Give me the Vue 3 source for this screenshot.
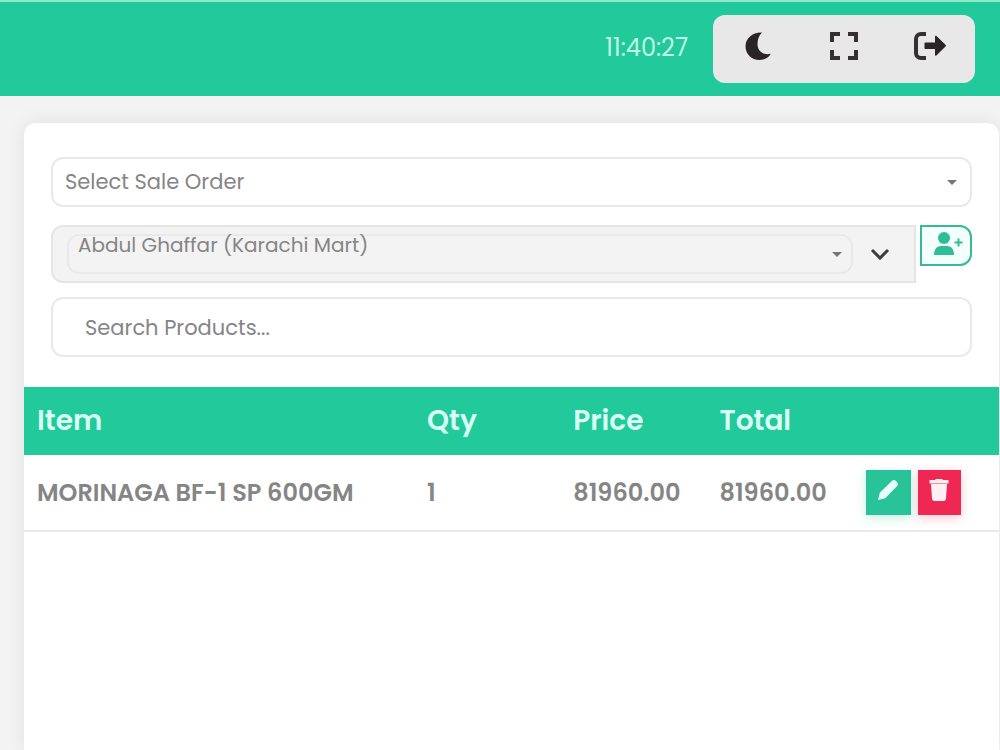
<script setup>
import { ref } from 'vue'

const order = ref('')
const customer = ref('Abdul Ghaffar (Karachi Mart)')
const search = ref('')
const items = ref([
  { id: 1, name: 'MORINAGA BF-1 SP 600GM', qty: 1, price: '81960.00', total: '81960.00' }
])
</script>

<template>
  <div class="page">
    <header class="topbar">
      <time class="clock">11:40:27</time>
      <nav class="tools" aria-label="Tools">
        <button type="button" aria-label="Dark mode">
          <svg width="26" height="28" viewBox="0 0 26 28"><path d="M17 .5C8 0 .5 6 .5 14.300.5 22 6.500 28 14.500 28c5 0 9.300-2.500 11.200-6.300-6.700 1.800-13.200-2-13.200-9.700C12.500 7 14 3.500 17 .5z" /></svg>
        </button>
        <button type="button" aria-label="Full screen">
          <svg width="28" height="28" viewBox="0 0 28 28"><path class="line" d="M2 10V2h8M18 2h8v8M26 18v8h-8M10 26H2v-8" /></svg>
        </button>
        <button type="button" aria-label="Log out">
          <svg width="32" height="28" viewBox="0 0 32 28"><path class="line" d="M12 2H7a5 5 0 0 0-5 5v14a5 5 0 0 0 5 5h5" /><path d="M11.500 10.500h9.500V5c0-1.200.8-1.600 1.700-.8l8.800 8.600c.6.600.6 1.200 0 1.800l-8.800 8.600c-.9.900-1.700.4-1.700-.8V17h-9.500c-.7 0-1-.4-1-1v-4.500c0-.6.3-1 1-1z" /></svg>
        </button>
      </nav>
    </header>

    <main class="card">
      <form class="filters" @submit.prevent>
        <div class="pick order">
          <select v-model="order" aria-label="Sale order">
            <option value="">Select Sale Order</option>
          </select>
          <svg class="caret" width="10" height="5" viewBox="0 0 10 5"><path d="M0 0h10L5 5z" /></svg>
        </div>
        <div class="customer-row">
          <div class="group">
            <div class="pick customer">
              <select v-model="customer" aria-label="Customer">
                <option>Abdul Ghaffar (Karachi Mart)</option>
              </select>
              <svg class="caret" width="10" height="5" viewBox="0 0 10 5"><path d="M0 0h10L5 5z" /></svg>
            </div>
            <button type="button" class="expand" aria-label="Show customers">
              <svg width="20" height="12" viewBox="0 0 20 12"><path d="M2 2l8 8 8-8" /></svg>
            </button>
          </div>
          <button type="button" class="add" aria-label="Add customer">
            <svg width="30" height="24" viewBox="0 0 30 24"><circle cx="11" cy="6" r="6" /><path d="M1 23c0-6 3-9 7-9h6c4 0 7 3 7 9z" /><path class="plus" d="M25.500 6.500v8M21.500 10.500h8" /></svg>
          </button>
        </div>
        <input v-model="search" class="search" type="text" placeholder="Search Products..." aria-label="Search products">
      </form>

      <table>
        <thead>
          <tr>
            <th class="wide">Item</th>
            <th>Qty</th>
            <th>Price</th>
            <th>Total</th>
            <td></td>
          </tr>
        </thead>
        <tbody>
          <tr v-for="item in items" :key="item.id">
            <td>{{ item.name }}</td>
            <td>{{ item.qty }}</td>
            <td>{{ item.price }}</td>
            <td>{{ item.total }}</td>
            <td>
              <div class="actions">
                <button type="button" class="edit" aria-label="Edit item">
                  <svg width="22" height="22" viewBox="0 0 22 22"><path d="M14.500 2.200c1.200-1.200 2.800-1.600 4-.6l1.800 1.800c1 1.200.8 2.700-.4 3.900L8.200 19.200 1 21l1.800-7.200z" /></svg>
                </button>
                <button type="button" class="remove" aria-label="Delete item">
                  <svg width="22" height="22" viewBox="0 0 22 22"><path d="M1.500 1h5.500l1-1h6l1 1h5.500v3.500h-19zM3 5h16l-1 14.500c-.1 1.400-1 2.500-2.400 2.500H6.400C5 22 4.100 20.900 4 19.500z" /></svg>
                </button>
              </div>
            </td>
          </tr>
        </tbody>
      </table>
    </main>
  </div>
</template>

<style>
body {
  margin: 0;
  background: #f3f3f3;
}
</style>

<style scoped>
* {
  box-sizing: border-box;
}
.page {
  display: flex;
  flex-direction: column;
  min-height: 100vh;
  color: #858585;
  font-family: Poppins, Inter, sans-serif;
  font-size: 20px;
}
button {
  display: flex;
  align-items: center;
  justify-content: center;
  padding: 0;
  border: 0;
  background: none;
  cursor: pointer;
}
.topbar {
  display: flex;
  align-items: center;
  justify-content: flex-end;
  gap: 25px;
  height: 96px;
  padding-right: 25px;
  border-top: 2px solid #8ee8cb;
  background: #22c99a;
}
.clock {
  padding-bottom: 4px;
  color: #c0f7e6;
  font-size: 24px;
}
.tools {
  display: flex;
  justify-content: space-between;
  width: 262px;
  height: 68px;
  padding: 0 25px 6px;
  border-radius: 12px;
  background: #e8e8e8;
}
.tools button {
  width: 40px;
}
.tools svg {
  fill: #292425;
}
.tools .line {
  fill: none;
  stroke: #353132;
  stroke-width: 4;
}
.card {
  flex: 1;
  margin: 27px 1px 0 24px;
  border-radius: 12px 12px 0 0;
  background: #fff;
  box-shadow: 0 0 20px rgba(0, 0, 0, 0.08);
}
.filters {
  display: flex;
  flex-direction: column;
  padding: 34px 27px 30px;
}
.pick {
  position: relative;
}
.pick,
.search {
  border: 2px solid #e9e9e9;
  border-radius: 12px;
}
select,
.search {
  display: block;
  width: 100%;
  color: #858585;
  font-family: inherit;
  font-size: 21px;
  appearance: none;
}
select {
  border: 0;
  background: transparent;
}
.order select {
  height: 46px;
  padding: 0 36px 2px 12px;
}
.caret {
  position: absolute;
  top: 50%;
  right: 13px;
  margin-top: -2px;
  fill: #777;
}
.customer-row {
  display: flex;
  align-items: flex-start;
  gap: 4px;
  margin: 18px 0 14px;
}
.group {
  display: flex;
  flex: 1;
  align-items: center;
  height: 58px;
  padding-left: 14px;
  border: 2px solid #e6e5e6;
  border-radius: 12px 0 0 12px;
  background: #f4f3f4;
}
.customer {
  flex: 1;
  height: 40px;
}
.customer select {
  height: 32px;
  margin-top: -7px;
  padding: 0 30px 0 9px;
  font-size: 20px;
}
.customer .caret {
  right: 9px;
}
.expand {
  width: 61px;
  height: 40px;
  padding-right: 8px;
}
.expand path {
  fill: none;
  stroke: #3c3c3c;
  stroke-width: 3;
}
.add {
  width: 52px;
  height: 41px;
  padding-bottom: 4px;
  border: 2px solid #38b995;
  border-radius: 0 12px 12px 0;
  background: #f3fffc;
}
.add svg {
  margin-left: 4px;
  fill: #2fbd98;
}
.add .plus {
  stroke: #2fbd98;
  stroke-width: 2;
}
.search {
  height: 60px;
  padding: 0 32px;
  background: #fff;
}
.search::placeholder {
  color: #858585;
  opacity: 1;
}
table {
  width: 100%;
  table-layout: fixed;
  border-collapse: collapse;
}
th,
td {
  width: 15%;
  padding: 0 13px;
  text-align: left;
}
.wide {
  width: 40%;
}
thead tr {
  height: 68px;
  background: #22c99a;
}
th {
  color: #d9fff5;
  font-size: 28px;
  font-weight: 600;
}
tbody tr {
  height: 76px;
  border-bottom: 2px solid #e8e8e8;
}
tbody td {
  color: #858585;
  font-size: 24px;
  font-weight: 600;
  white-space: nowrap;
}
.actions {
  display: flex;
  gap: 7px;
}
.actions button {
  width: 45px;
  height: 45px;
  padding-bottom: 6px;
}
.actions svg {
  fill: #e9fff9;
}
.actions .edit {
  background: #28c399;
  box-shadow: 0 3px 10px rgba(34, 201, 154, 0.25);
}
.actions .remove {
  width: 43px;
  background: #ef2853;
  box-shadow: 0 3px 10px rgba(239, 40, 83, 0.25);
}
.actions .remove svg {
  fill: #fff0f3;
}
</style>
